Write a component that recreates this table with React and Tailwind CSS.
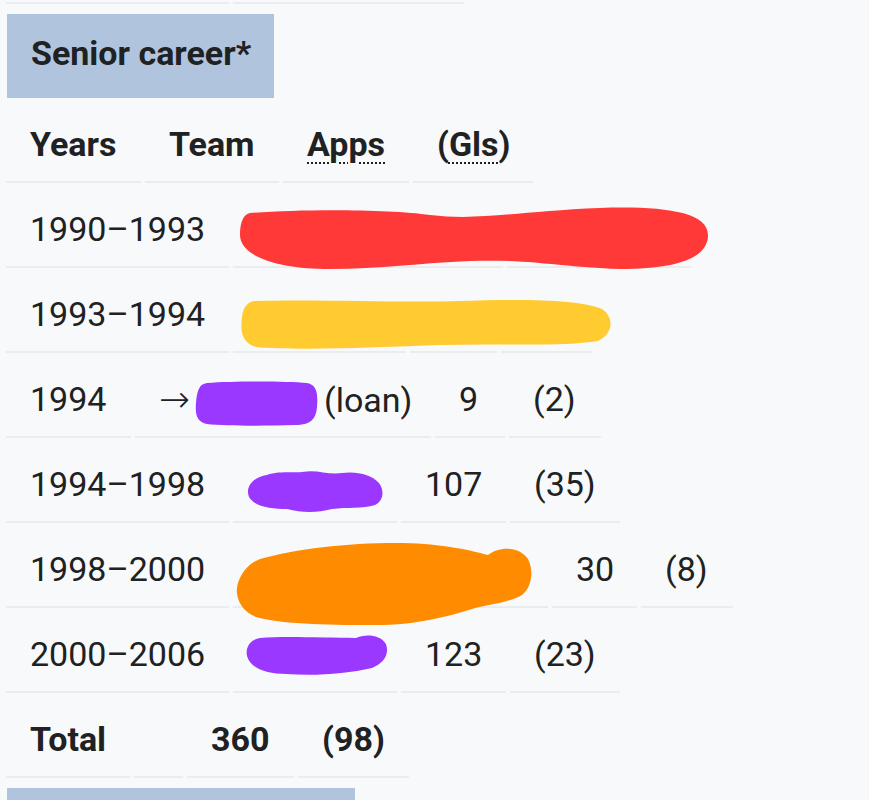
import React from "react";

function Cell({ w, bold, children }) {
  return (
    <div
      className={`${w} h-[85px] shrink-0 border-b-2 border-[#eaecf0] px-[24px] pt-[21px] leading-[51px] whitespace-nowrap ${
        bold ? "font-bold" : ""
      }`}
    >
      {children}
    </div>
  );
}

function Blob({ pos, w, h, color, d }) {
  return (
    <svg
      className={`absolute ${pos} overflow-visible`}
      width={w}
      height={h}
      viewBox={`0 0 ${w} ${h}`}
    >
      <path d={d} fill={color} />
    </svg>
  );
}

export default function App() {
  return (
    <div className="min-h-[800px] bg-[#f8f9fa] pl-[6px] text-[34px] text-[#202122] font-['Roboto',sans-serif]">
      {/* end of previous section */}
      <div className="flex gap-[4px]">
        <div className="w-[223px] h-[4px] border-b-2 border-[#eaecf0]" />
        <div className="w-[231px] h-[4px] border-b-2 border-[#eaecf0]" />
      </div>

      <div className="mt-[10px] ml-[1px] w-[267px] h-[84px] bg-[#b0c4de] px-[24px] pt-[14px] leading-[51px] font-bold whitespace-nowrap">
        Senior career*
      </div>

      {/* header */}
      <div className="relative flex gap-[4px]">
        <Cell w="w-[135px]" bold>
          Years
        </Cell>
        <Cell w="w-[134px]" bold>
          Team
        </Cell>
        <Cell w="w-[126px]" bold>
          <span className="underline decoration-dotted decoration-2 underline-offset-[6px]">
            Apps
          </span>
        </Cell>
        <Cell w="w-[120px]" bold>
          (
          <span className="underline decoration-dotted decoration-2 underline-offset-[6px]">
            Gls
          </span>
          )
        </Cell>
      </div>

      {/* 1990-1993 */}
      <div className="relative flex gap-[4px]">
        <Cell w="w-[223px]">1990–1993</Cell>
        <Cell w="w-[270px]" />
        <Cell w="w-[184px]" />
        <Blob
          pos="left-[234px] top-[24px]"
          w={468}
          h={63}
          color="#ff3838"
          d="M 10 6 C 60 2, 150 2, 190 8 C 240 14, 280 4, 360 1 C 420 -1, 468 4, 468 28 C 468 50, 440 62, 380 62 C 320 60, 290 52, 230 54 C 180 56, 140 62, 90 62 C 40 62, 0 50, 0 28 C 0 14, 4 7, 10 6 Z"
        />
      </div>

      {/* 1993-1994 */}
      <div className="relative flex gap-[4px]">
        <Cell w="w-[223px]">1993–1994</Cell>
        <Cell w="w-[173px]" />
        <Cell w="w-[87px]" />
        <Cell w="w-[91px]" />
        <Blob
          pos="left-[234px] top-[29px]"
          w={372}
          h={52}
          color="#ffcb30"
          d="M 14 4 C 80 2, 160 6, 220 4 C 280 2, 340 2, 362 12 C 374 20, 374 36, 358 44 C 320 50, 260 46, 200 48 C 140 50, 60 54, 16 50 C 2 46, 0 34, 2 20 C 3 10, 8 5, 14 4 Z"
        />
      </div>

      {/* 1994 loan */}
      <div className="relative flex gap-[4px]">
        <Cell w="w-[125px]">1994</Cell>
        <Cell w="w-[296px]">
          <span className="inline-block w-[34px] font-['DejaVu_Sans',sans-serif] text-[37px] font-light">
            →
          </span>
          <span className="inline-block w-[131px]" />
          (loan)
        </Cell>
        <Cell w="w-[70px]">9</Cell>
        <Cell w="w-[92px]">(2)</Cell>
        <Blob
          pos="left-[189px] top-[28px]"
          w={123}
          h={45}
          color="#9b38ff"
          d="M 12 2 C 40 0, 90 0, 112 2 C 122 4, 123 12, 122 26 C 121 38, 116 44, 100 44 C 70 45, 30 45, 12 43 C 2 41, 0 34, 1 22 C 2 10, 4 3, 12 2 Z"
        />
      </div>

      {/* 1994-1998 */}
      <div className="relative flex gap-[4px]">
        <Cell w="w-[223px]">1994–1998</Cell>
        <Cell w="w-[164px]" />
        <Cell w="w-[105px]">107</Cell>
        <Cell w="w-[110px]">(35)</Cell>
        <Blob
          pos="left-[241px] top-[31px]"
          w={137}
          h={44}
          color="#9b38ff"
          d="M 20 6 C 30 2, 45 4, 55 3 C 70 0, 80 6, 95 4 C 110 2, 125 6, 132 14 C 138 22, 136 32, 128 36 C 115 40, 100 38, 85 40 C 70 44, 55 44, 40 40 C 25 40, 8 38, 2 28 C -2 18, 6 8, 20 6 Z"
        />
      </div>

      {/* 1998-2000 */}
      <div className="relative flex gap-[4px]">
        <Cell w="w-[223px]">1998–2000</Cell>
        <Cell w="w-[315px]" />
        <Cell w="w-[85px]">30</Cell>
        <Cell w="w-[92px]">(8)</Cell>
        <Blob
          pos="left-[230px] top-[20px]"
          w={295}
          h={82}
          color="#ff8c00"
          d="M 24 16 C 60 6, 110 0, 160 0 C 200 0, 230 6, 252 12 C 262 4, 282 2, 292 16 C 298 28, 296 44, 286 52 C 272 60, 250 62, 236 66 C 210 74, 180 82, 140 82 C 100 82, 50 82, 20 74 C 4 68, -2 52, 2 40 C 6 28, 14 20, 24 16 Z"
        />
      </div>

      {/* 2000-2006 */}
      <div className="relative flex gap-[4px]">
        <Cell w="w-[223px]">2000–2006</Cell>
        <Cell w="w-[164px]" />
        <Cell w="w-[105px]">123</Cell>
        <Cell w="w-[110px]">(23)</Cell>
        <Blob
          pos="left-[240px] top-[26px]"
          w={142}
          h={42}
          color="#9b38ff"
          d="M 14 4 C 40 2, 80 4, 110 4 C 118 0, 134 0, 140 10 C 144 22, 136 30, 126 34 C 100 40, 70 42, 40 40 C 20 40, 4 34, 1 22 C -1 12, 6 5, 14 4 Z"
        />
      </div>

      {/* total */}
      <div className="relative flex gap-[4px]">
        <Cell w="w-[124px]" bold>
          Total
        </Cell>
        <Cell w="w-[49px]" />
        <Cell w="w-[107px]" bold>
          360
        </Cell>
        <Cell w="w-[111px]" bold>
          (98)
        </Cell>
      </div>

      <div className="mt-[10px] ml-[1px] w-[348px] h-[12px] bg-[#b0c4de]" />
    </div>
  );
}
